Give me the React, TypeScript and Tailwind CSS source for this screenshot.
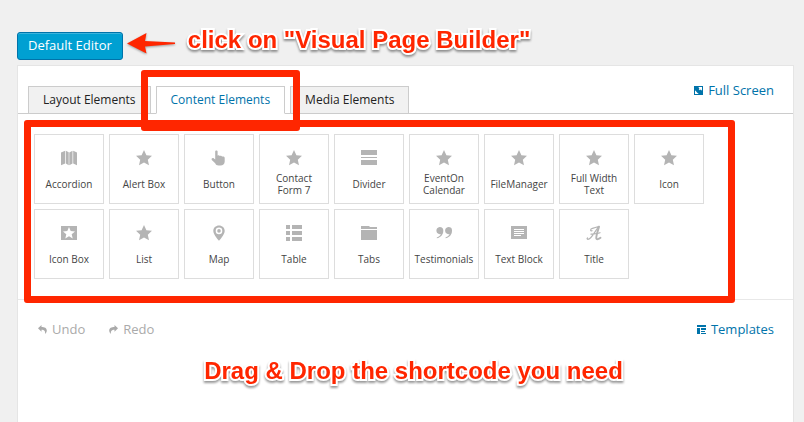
import React, { useState } from 'react';

type IconName = 'map' | 'star' | 'hand' | 'divider' | 'starBox' | 'pin' | 'table' | 'folder' | 'quote' | 'text' | 'script';

const icons: Record<IconName, React.ReactNode> = {
    map: <path d="M0 2.6 4.200.8v12.6L0 15.2zM4.900.8l2.800 1.4v13L4.900 13.4zM8.300 2.6 11.500.8v12.6l-3.200 1.800zM12.200.8 16 2.4v12.800l-3.800-1.800z" />,
    star: <path d="M8 0l2.400 5.200 5.600.6-4.200 3.900 1.200 5.600L8 12.600 3 15.300l1.200-5.600L0 5.800l5.600-.6z" />,
    hand: <path d="M4.200 1.500C4.200.2 6.600.2 6.600 1.500V5.800C7 5 8.500 5.200 8.800 6 9.400 5.400 10.800 5.700 11 6.600 11.800 6.200 13.700 6.500 13.700 8V11.500C13.700 14 11.800 15.500 9.500 15.500H7.500C5.800 15.500 4.800 14.500 4.200 13.200L.8 10C0 8.500 1.600 7.400 2.700 8.300L4.200 9.500z" />,
    divider: <path d="M0 0h16v5H0zM0 7h16v1H0zM0 10h16v5H0z" />,
    starBox: <path fillRule="evenodd" d="M0 1h16v14H0zM8 2 6.300 6l-4.300.4 3.300 2.800-1 4.300L8 11.200l3.700 2.300-1-4.300L14 6.400 9.700 6z" />,
    pin: <path fillRule="evenodd" d="M8 .5C4.800.5 2.300 2.800 2.300 5.900 2.300 9.500 8 15.800 8 15.800S13.700 9.500 13.700 5.900C13.700 2.800 11.200.5 8 .5zM8 2.600a3.300 3.300 0 1 1 0 6.600 3.300 3.300 0 0 1 0-6.600zM8 4.100a1.800 1.800 0 1 0 0 3.600 1.800 1.800 0 0 0 0-3.600z" />,
    table: <path d="M0 0h4v4H0zM6 0h10v4H6zM0 6h4v4H0zM6 6h10v4H6zM0 12h4v4H0zM6 12h10v4H6z" />,
    folder: <path d="M0 1h8l1 1h7v2H0zM0 5h16v10H0z" />,
    quote: <path d="M3.700 2a3.600 3.600 0 0 1 3.600 3.700C7.300 9.500 4.800 12.500.8 13.300v-.9c2.200-.6 3.700-1.700 4-3.300A3.600 3.600 0 1 1 3.700 2zM12.400 2A3.600 3.600 0 0 1 16 5.700c0 3.800-2.500 6.800-6.500 7.600v-.9c2.200-.6 3.700-1.700 4-3.300A3.600 3.600 0 1 1 12.400 2z" />,
    text: <path fillRule="evenodd" d="M0 1h16v13H0zM3 4h10v1H3zM3 6h10v1H3zM3 8h10v1H3zM3 10h7v1H3z" />,
    script: (
        <g fill="none" stroke="currentColor" strokeLinecap="round">
            <path strokeWidth="1.200" d="M6.500 3.400C4 3.800 4.200 6.400 6 5.700M6.500 3.400C8.500 2.700 10.500 2 13.200 1.300M12.600 1.800C9 6 5.500 13.500 2.600 14.200 1.200 14.600.7 13.500 1.500 12.900M5 9.200c3-.5 6-.4 9-1.500" />
            <path strokeWidth="1.900" d="M13 1.800C11.500 6.500 9.900 11.500 10.300 13.500c.4 1.300 2.300.6 4.200-.8" />
        </g>
    ),
};

const elements: { label: string; icon: IconName }[] = [
    { label: 'Accordion', icon: 'map' },
    { label: 'Alert Box', icon: 'star' },
    { label: 'Button', icon: 'hand' },
    { label: 'Contact Form 7', icon: 'star' },
    { label: 'Divider', icon: 'divider' },
    { label: 'EventOn Calendar', icon: 'star' },
    { label: 'FileManager', icon: 'star' },
    { label: 'Full Width Text', icon: 'star' },
    { label: 'Icon', icon: 'star' },
    { label: 'Icon Box', icon: 'starBox' },
    { label: 'List', icon: 'star' },
    { label: 'Map', icon: 'pin' },
    { label: 'Table', icon: 'table' },
    { label: 'Tabs', icon: 'folder' },
    { label: 'Testimonials', icon: 'quote' },
    { label: 'Text Block', icon: 'text' },
    { label: 'Title', icon: 'script' },
];

const tabs = ['Layout Elements', 'Content Elements', 'Media Elements'];

function Note({ children }: { children: React.ReactNode }) {
    return (
        <p className="whitespace-nowrap font-['Liberation_Sans',sans-serif] text-2xl font-bold text-[#ff2600] [-webkit-text-stroke:4px_white] [paint-order:stroke_fill] [filter:drop-shadow(0_2px_1px_rgba(0,0,0,0.4))]">
            {children}
        </p>
    );
}

export default function App() {
    const [activeTab, setActiveTab] = useState(1);

    return (
        <div className="flex min-h-screen flex-col bg-[#f0f0f0] pl-[17px] pr-[10px] pt-6 font-['Open_Sans',sans-serif] text-[13px]">
            <div className="flex h-[41px] items-start">
                <button className="mt-2 h-7 rounded-[3px] border border-[#0073aa] bg-[#00a0d2] px-[10px] text-white shadow-[inset_0_1px_0_rgba(120,200,230,0.5)]">
                    Default Editor
                </button>
                <svg className="ml-1 mt-2 h-6 w-[50px] shrink-0 drop-shadow-[0_1px_1px_rgba(0,0,0,0.35)]" viewBox="0 0 50 24" fill="#ff2600" aria-hidden="true">
                    <path d="M0 11.500 19.500 1 18 9 48 10.500V12L18 14.500 19.500 21.500z" />
                </svg>
                <div className="ml-[11px]">
                    <Note>click on "Visual Page Builder"</Note>
                </div>
            </div>

            <main className="flex-1 border border-b-0 border-[#e5e5e5] bg-white">
                <section className="border-b border-[#e8e8e8]">
                    <div className="flex items-end justify-between border-b border-[#ccc] pl-[10px] pr-[19px] pt-5">
                        <div role="tablist" className="-mb-px flex gap-[5px]">
                            {tabs.map((tab, index) => (
                                <div key={tab} className="relative">
                                    <button
                                        role="tab"
                                        aria-selected={activeTab === index}
                                        onClick={() => setActiveTab(index)}
                                        className={`h-7 whitespace-nowrap border px-[14px] text-xs ${activeTab === index ? 'border-[#ccc] border-b-white bg-white text-[#0073aa]' : 'border-[#ccc] bg-[#f1f1f1] text-[#222]'}`}
                                    >
                                        {tab}
                                    </button>
                                    {index === 1 && (
                                        <span className="pointer-events-none absolute -inset-x-[15px] -bottom-[17px] -top-4 z-10 rounded-[3px] border-[7px] border-[#ff2600]" />
                                    )}
                                </div>
                            ))}
                        </div>
                        <a href="#fullscreen" className="flex items-center gap-[5px] self-start leading-[9px] text-[#0073aa]">
                            <svg className="h-[9px] w-[9px]" viewBox="0 0 9 9" aria-hidden="true">
                                <path fill="currentColor" d="M0 0h9v9H0z" />
                                <path fill="white" d="M4.200 1H8v3.800L6.800 3.600 5.700 4.200 4.800 3.300 5.400 2.200zM1 4.200 2.200 5.400 3.300 6.800 4.800 8H1z" />
                            </svg>
                            Full Screen
                        </a>
                    </div>

                    <div className="relative -mb-1 ml-[6px] mr-[58px] mt-[6px] flex flex-wrap gap-[5px] rounded-[3px] border-[7px] border-[#ff2600] pb-[17px] pl-[3px] pt-[7px]">
                        {elements.map((element) => (
                            <button
                                key={element.label}
                                className="flex h-[70px] w-[70px] flex-col items-center border border-[#ddd] bg-white pt-[15px] text-[10px] leading-3 text-[#444]"
                            >
                                <svg className="h-4 w-4 shrink-0 text-[#b4b4b4]" viewBox="0 0 16 16" fill="currentColor" aria-hidden="true">
                                    {icons[element.icon]}
                                </svg>
                                <span className="mt-[6px] flex h-6 max-w-[60px] items-center">{element.label}</span>
                            </button>
                        ))}
                    </div>
                </section>

                <div className="flex items-center pl-5 pr-[19px] pt-[19px] leading-5 text-[#aaa]">
                    <button className="flex items-center gap-[5px]">
                        <svg className="h-[9px] w-[9px]" viewBox="0 0 9 9" fill="currentColor" aria-hidden="true">
                            <path d="M0 3.300 3.500 0v2C6.500 2 8.800 3 8.800 5.500 8.800 7 8 8.200 7 9 7.600 6 6 4.700 3.500 4.700v2z" />
                        </svg>
                        Undo
                    </button>
                    <button className="ml-6 flex items-center gap-[5px]">
                        <svg className="h-[9px] w-[9px]" viewBox="0 0 9 9" fill="currentColor" aria-hidden="true">
                            <path d="M9 3.300 5.500 0v2C2.500 2 .2 3 .2 5.500.2 7 1 8.200 2 9 1.400 6 3 4.700 5.500 4.700v2z" />
                        </svg>
                        Redo
                    </button>
                    <a href="#templates" className="ml-auto flex items-center gap-[5px] text-[#0073aa]">
                        <svg className="h-[9px] w-[9px]" viewBox="0 0 9 9" fill="currentColor" aria-hidden="true">
                            <path d="M0 0h9v2H0zM0 3h3v6H0zM4 3h5v2H4zM4 6h4v1H4zM4 8h5v1H4z" />
                        </svg>
                        Templates
                    </a>
                </div>

                <div className="flex justify-center pl-4 pt-4">
                    <Note>Drag &amp; Drop the shortcode you need</Note>
                </div>
            </main>
        </div>
    );
}
